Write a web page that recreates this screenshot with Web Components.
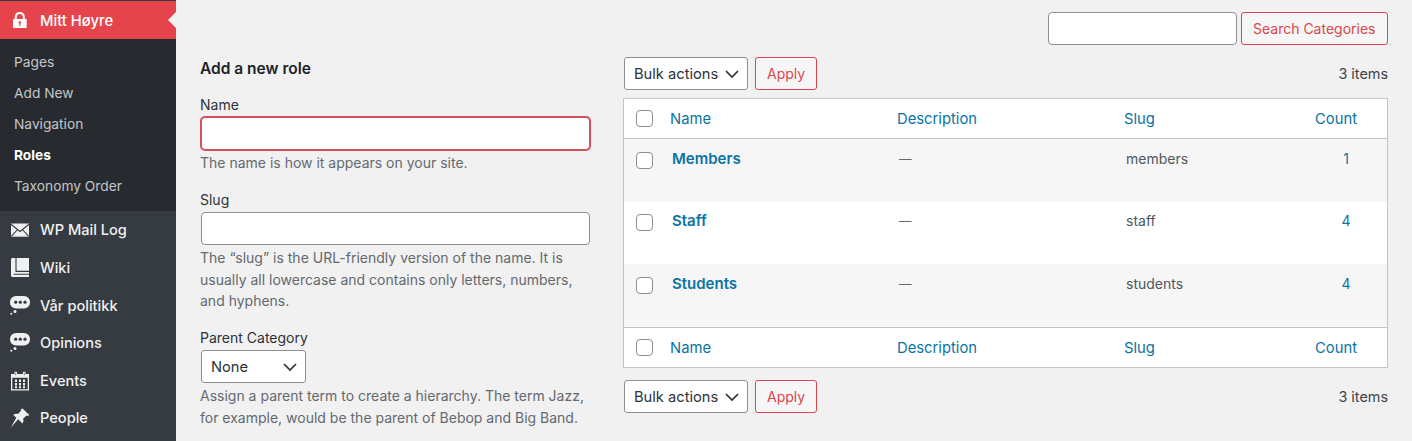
<!DOCTYPE html>
<html><head><meta charset="utf-8">
<style>
html,body{margin:0;height:441px;overflow:hidden;background:#f1f1f1;font-family:Inter,"Liberation Sans",sans-serif;font-size:14px;color:#3c434a}
#app{display:flex;height:441px}
wp-content{display:block;flex:1;min-width:0}
</style></head><body>
<div id="app">
<wp-sidebar>
  <wp-head-item slot="head" label="Mitt Høyre"><svg viewBox="0 0 20 20" width="20" height="20"><path fill="#fff" fill-rule="evenodd" d="M4 9h.8V6.800C4.800 3.800 6.800 2 9.800 2s5 1.800 5 4.800V9h.9c.6 0 1 .4 1 1v7c0 .6-.4 1-1 1H4c-.6 0-1-.4-1-1v-7c0-.6.4-1 1-1zm2.800 0h6V6.800c0-1.700-1.200-2.900-3-2.900s-3 1.200-3 2.900zM8.500 12.500c0 .5.3.9.8 1.100V16h1.100v-2.400c.4-.2.700-.6.700-1.100 0-.7-.6-1.200-1.300-1.200s-1.300.5-1.300 1.200z"/></svg></wp-head-item>
  <wp-sub-item>Pages</wp-sub-item>
  <wp-sub-item>Add New</wp-sub-item>
  <wp-sub-item>Navigation</wp-sub-item>
  <wp-sub-item current>Roles</wp-sub-item>
  <wp-sub-item>Taxonomy Order</wp-sub-item>
  <wp-menu-item slot="menu" hh="38" label="WP Mail Log"><svg viewBox="0 0 20 20" width="20" height="20"><rect x="1" y="3.500" width="18" height="13.200" fill="#f0f0f1"/><path d="M1 4.200l9 7.300 9-7.300M1.300 16.300l6.300-6.800M18.700 16.300l-6.300-6.800" fill="none" stroke="#363b41" stroke-width="1.100"/></svg></wp-menu-item>
  <wp-menu-item slot="menu" hh="38" label="Wiki"><svg viewBox="0 0 20 20" width="20" height="20"><path fill="#f0f0f1" d="M2.500 0H19v19H2.500C1.500 19 1 18.300 1 17.500V1.500C1 .7 1.500 0 2.500 0z"/><path d="M6 0v13.400h13M3.700 16.300H19" fill="none" stroke="#363b41" stroke-width="1.100"/></svg></wp-menu-item>
  <wp-menu-item slot="menu" hh="37" label="Vår politikk"><wp-chat-icon></wp-chat-icon></wp-menu-item>
  <wp-menu-item slot="menu" hh="38" label="Opinions"><wp-chat-icon></wp-chat-icon></wp-menu-item>
  <wp-menu-item slot="menu" hh="37" label="Events"><svg viewBox="0 0 20 20" width="20" height="20"><path fill="#f0f0f1" fill-rule="evenodd" d="M5 .8h1.500c.4 0 .6.300.6.600V3h5.800V1.400c0-.3.200-.6.600-.6H15c.3 0 .6.300.6.600V3H19v16.500H1V3h3.400V1.400c0-.3.300-.6.600-.6zM2.300 6.800v11.400h15.400V6.800zM5.500 1.800V4.300h.6V1.800zM13.900 1.800V4.300h.6V1.800zM5 8.500h2v2.400H5zM9 8.500h2v2.400H9zM13 8.500h2v2.400h-2zM5 12h2v2.400H5zM9 12h2v2.400H9zM13 12h2v2.400h-2zM5 15.300h2v2H5zM9 15.300h2v2H9zM13 15.300h2v2h-2z"/></svg></wp-menu-item>
  <wp-menu-item slot="menu" hh="38" label="People"><svg viewBox="0 0 20 20" width="20" height="20"><path fill="#f0f0f1" d="M12.500.5l6.800 6.400-1.500 1.200-1.300-.6-3.400 3.300c.6 1.800.3 3.300-.6 4.700L8.200 11.200.8 19.500l5.500-9.800-3.100-3c1.400-.9 3-1.200 4.800-.6l3-3.400-.3-1.200z"/></svg></wp-menu-item>
</wp-sidebar>
<wp-content>
  <wp-search></wp-search>
  <wp-columns>
    <wp-form slot="left"></wp-form>
    <wp-list slot="right"></wp-list>
  </wp-columns>
</wp-content>
</div>
<script>
class Lazy extends HTMLElement{
  connectedCallback(){ if(this.shadowRoot) return; this.attachShadow({mode:'open'}).innerHTML=this.render(); }
}
const reg=(n,render)=>customElements.define(n,class extends Lazy{render(){return render(this)}});

reg('wp-chat-icon',()=>`<style>:host{display:block;width:20px;height:20px}svg{display:block}</style><svg viewBox="0 0 20 20" width="20" height="20"><rect x="0" y="0" width="20" height="12.400" rx="6" fill="#f0f0f1"/><circle fill="#363b41" cx="5.700" cy="6.200" r="1.600"/><circle fill="#363b41" cx="10.300" cy="6.200" r="1.600"/><circle fill="#363b41" cx="15" cy="6.200" r="1.600"/><circle fill="#f0f0f1" cx="5" cy="15.500" r="1.500"/><circle fill="#f0f0f1" cx="1.300" cy="17.700" r="1"/></svg>`);

reg('wp-sidebar',()=>`<style>:host{display:flex;flex-direction:column;width:176px;flex:none;height:441px;background:#363b41;overflow:hidden}
.top{height:1px;background:#363b41}
.sub{background:#272b2f;padding:8px 0 9px}
.menu{display:flex;flex-direction:column}</style>
<div class="top"></div><slot name="head"></slot><div class="sub"><slot></slot></div><div class="menu"><slot name="menu"></slot></div>`);

reg('wp-head-item',h=>`<style>:host{display:flex;align-items:center;height:38px;background:#e5444c;color:#fff;position:relative}
.i{width:40px;display:flex;justify-content:center;flex:none}
.l{font-weight:500;font-size:14.800px;padding-top:1px}
.arrow{position:absolute;right:0;top:50%;margin-top:-8px;border:8px solid transparent;border-right-color:#f1f1f1;border-left:0}
::slotted(svg){display:block}</style>
<div class="i"><slot></slot></div><div class="l">${h.getAttribute('label')}</div><div class="arrow"></div>`);

reg('wp-sub-item',h=>`<style>:host{display:block;height:31px;line-height:31px;padding-left:14px;font-size:13.750px;color:${h.hasAttribute('current')?'#fff':'#c3c5c7'};font-weight:${h.hasAttribute('current')?700:400}}</style><slot></slot>`);

reg('wp-menu-item',h=>`<style>:host{display:flex;align-items:center;height:${h.getAttribute('hh')}px;color:#f0f0f1}
.i{width:40px;display:flex;justify-content:center;flex:none}
.l{font-size:14.600px;font-weight:500}</style>
<div class="i"><slot></slot></div><div class="l">${h.getAttribute('label')}</div>`);

reg('wp-button',h=>`<style>:host{display:inline-flex;align-items:center;justify-content:center;box-sizing:border-box;height:33px;border:1px solid #d9464e;border-radius:3px;color:#d9464e;background:#f6f6f6;font-size:14px;padding:0 ${h.getAttribute('pad')||11}px}</style><slot></slot>`);
reg('wp-select',h=>`<style>:host{display:flex;align-items:center;justify-content:space-between;box-sizing:border-box;height:33px;border:1px solid #8c8f94;border-radius:3px;background:#fff;color:#2c3338;font-size:14.700px;padding:0 8px 0 9px;width:${h.getAttribute('w')}px}
svg{display:block}</style><slot></slot><svg viewBox="0 0 14 14" width="14" height="14"><path d="M1 4l6 6 6-6" fill="none" stroke="#2c3338" stroke-width="1.700"/></svg>`);
reg('wp-input',h=>`<style>:host{display:block;box-sizing:border-box;height:33px;border-radius:4px;background:#fff;border:1px solid ${h.hasAttribute('error')?'#d4505a':'#8c8f94'};${h.hasAttribute('error')?'box-shadow:0 0 0 1px #d4505a;':''}${h.getAttribute('w')?'width:'+h.getAttribute('w')+'px':''}}</style>`);
reg('wp-check',()=>`<style>:host{display:block;box-sizing:border-box;width:17px;height:17px;border:1px solid #8c8f94;border-radius:4px;background:#fff}</style>`);

reg('wp-search',()=>`<style>:host{display:flex;justify-content:flex-end;gap:4px;padding:12px 24px 0 0;height:33px}
</style><wp-input w="189"></wp-input><wp-button pad="11.500">Search Categories</wp-button>`);

reg('wp-columns',()=>`<style>:host{display:flex;padding:0 24px;gap:33px}
.l{width:390px;flex:none}.r{flex:1;min-width:0;padding-top:12px}</style>
<div class="l"><slot name="left"></slot></div><div class="r"><slot name="right"></slot></div>`);

reg('wp-field',h=>`<style>:host{display:block;margin-bottom:${h.getAttribute('mb')||17}px}
.lab{font-size:14px;line-height:19px;color:#2c3338;margin-bottom:3px}
.b{margin:0 0 0 1px;${h.hasAttribute('wide')?'':'width:105px'}}
.d{font-size:14px;line-height:21.500px;color:#646970;margin-top:2px}</style>
<div class="lab">${h.getAttribute('label')}</div><div class="b"><slot></slot></div><div class="d"><slot name="d"></slot></div>`);

reg('wp-form',()=>`<style>:host{display:block;padding-top:14px}
h2{margin:0 0 16px;font-size:15.500px;line-height:20px;font-weight:600;color:#1d2327}</style>
<h2>Add a new role</h2>
<wp-field wide label="Name" mb="16.500"><wp-input error></wp-input><span slot="d">The name is how it appears on your site.</span></wp-field>
<wp-field wide label="Slug" mb="16.500"><wp-input></wp-input><span slot="d">The “slug” is the URL-friendly version of the name. It is usually all lowercase and contains only letters, numbers, and hyphens.</span></wp-field>
<wp-field label="Parent Category"><wp-select w="105">None</wp-select><span slot="d">Assign a parent term to create a hierarchy. The term Jazz, for example, would be the parent of Bebop and Big Band.</span></wp-field>`);

reg('wp-nav',()=>`<style>:host{display:flex;align-items:center;height:33px;gap:7px;font-size:14.400px;padding-left:1px}
.n{margin-left:auto;color:#3c434a}</style>
<wp-select w="124">Bulk actions</wp-select><wp-button>Apply</wp-button><span class="n">3 items</span>`);

const grid=`display:grid;grid-template-columns:36px 227px 227px 191px 1fr;`;
reg('wp-thead',h=>`<style>:host{${grid}align-items:center;background:#fff;color:#0a73a5;font-size:14.800px;box-sizing:border-box;${h.hasAttribute('foot')?'border-top':'border-bottom'}:1px solid #c3c4c7;height:40px}
wp-check{margin-left:12px}span{padding-left:10px}</style>
<div><wp-check></wp-check></div><span>Name</span><span>Description</span><span>Slug</span><span>Count</span>`);
reg('wp-row',h=>`<style>:host{${grid}height:${h.getAttribute('hh')}px;background:${h.hasAttribute('alt')?'#f6f6f6':'#fff'};font-size:14px;color:#50575e}
:host>*{padding-top:${h.getAttribute('pt')}px;line-height:19px}
wp-check{margin:${h.getAttribute('ck')}px 0 0 12px;padding:0}
.t{font-size:15px;font-weight:600;color:#0a73a5;padding-left:12px}.c{padding-left:12px}.dash{font-size:12.500px;color:#646970}.num{text-align:center;color:#0a73a5}</style>
<wp-check></wp-check><div class="t">${h.getAttribute('n')}</div><div class="c dash">—</div><div class="c">${h.getAttribute('s')}</div><div class="num">${h.getAttribute('c')}</div>`);
reg('wp-table',()=>`<style>:host{display:block;border:1px solid #c3c4c7;margin:8px 0 12px;background:#fff}</style>
<wp-thead></wp-thead>
<wp-row alt hh="63" pt="10" ck="13" n="Members" s="members" c="1"></wp-row>
<wp-row hh="62" pt="9" ck="12" n="Staff" s="staff" c="4"></wp-row>
<wp-row alt hh="63" pt="10" ck="13" n="Students" s="students" c="4"></wp-row>
<wp-thead foot></wp-thead>`);
reg('wp-list',()=>`<style>:host{display:block}</style><wp-nav></wp-nav><wp-table></wp-table><wp-nav></wp-nav>`);
</script>
</body></html>
